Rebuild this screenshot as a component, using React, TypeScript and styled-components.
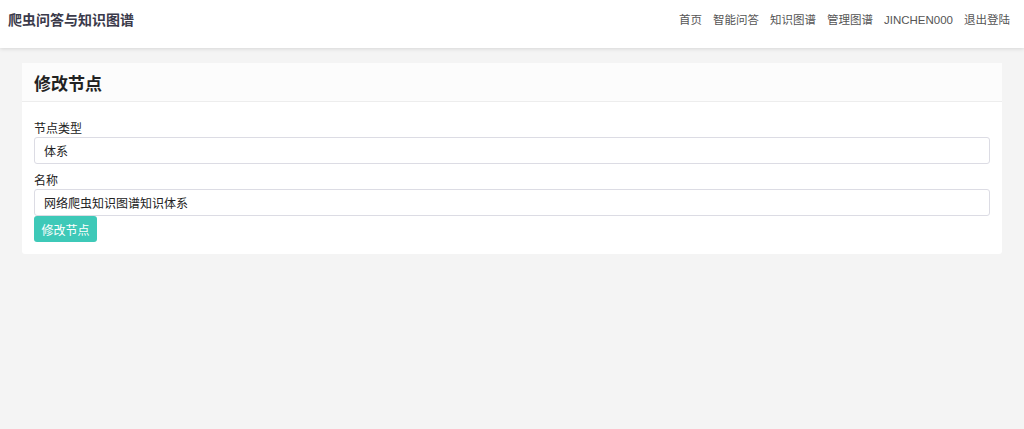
import React from "react";
import styled, { createGlobalStyle } from "styled-components";

const GlobalStyle = createGlobalStyle`
  html, body {
    margin: 0;
    padding: 0;
    background: #f4f4f4;
    font-family: "Helvetica Neue", "Liberation Sans", "Noto Sans CJK SC", sans-serif;
    color: #333;
  }
  * { box-sizing: border-box; }
`;

const Navbar = styled.nav`
  height: 48px;
  background: #fff;
  box-shadow: 0 1px 4px rgba(0, 0, 0, 0.12);
  display: flex;
  align-items: flex-start;
  justify-content: space-between;
  padding: 10px 14px 0 8px;
`;
const Brand = styled.div`
  font-size: 14px;
  font-weight: bold;
  color: #3a3a4a;
  line-height: 20px;
`;
const Links = styled.div`
  display: flex;
  gap: 11px;
  padding-top: 1px;
`;
const NavLink = styled.a`
  font-size: 11.5px;
  color: #555;
  line-height: 18px;
  text-decoration: none;
`;

const Main = styled.main`
  padding: 15px 22px;
`;
const Card = styled.section`
  background: #fff;
  border-radius: 3px;
`;
const CardHeader = styled.div`
  height: 39px;
  background: #fcfcfc;
  border-bottom: 1px solid #ededed;
  padding: 0 12px;
  display: flex;
  align-items: center;
`;
const Title = styled.h2`
  margin: 0;
  font-size: 17px;
  font-weight: bold;
  color: #222;
`;
const CardBody = styled.form`
  padding: 19px 12px 12px;
  display: flex;
  flex-direction: column;
`;
const Label = styled.label`
  font-size: 12px;
  line-height: 16px;
  color: #222;
`;
const Input = styled.input`
  height: 27px;
  border: 1px solid #dcdce4;
  border-radius: 3px;
  padding: 0 9px;
  font-size: 12px;
  color: #222;
  font-family: inherit;
  margin-bottom: ${(p: { $gap?: number }) => p.$gap ?? 0}px;
  outline: none;
`;
const Button = styled.button`
  align-self: flex-start;
  height: 26px;
  padding: 0 7.5px;
  border: none;
  border-radius: 3px;
  background: #3ec9b8;
  color: #fff;
  font-size: 12px;
  font-family: inherit;
`;

export default function App() {
  const links = ["首页", "智能问答", "知识图谱", "管理图谱", "JINCHEN000", "退出登陆"];
  return (
    <>
      <GlobalStyle />
      <Navbar>
        <Brand>爬虫问答与知识图谱</Brand>
        <Links>
          {links.map((l) => (
            <NavLink key={l}>{l}</NavLink>
          ))}
        </Links>
      </Navbar>
      <Main>
        <Card>
          <CardHeader>
            <Title>修改节点</Title>
          </CardHeader>
          <CardBody onSubmit={(e) => e.preventDefault()}>
            <Label>节点类型</Label>
            <Input defaultValue="体系" $gap={9} />
            <Label>名称</Label>
            <Input defaultValue="网络爬虫知识图谱知识体系" />
            <Button type="submit">修改节点</Button>
          </CardBody>
        </Card>
      </Main>
    </>
  );
}
